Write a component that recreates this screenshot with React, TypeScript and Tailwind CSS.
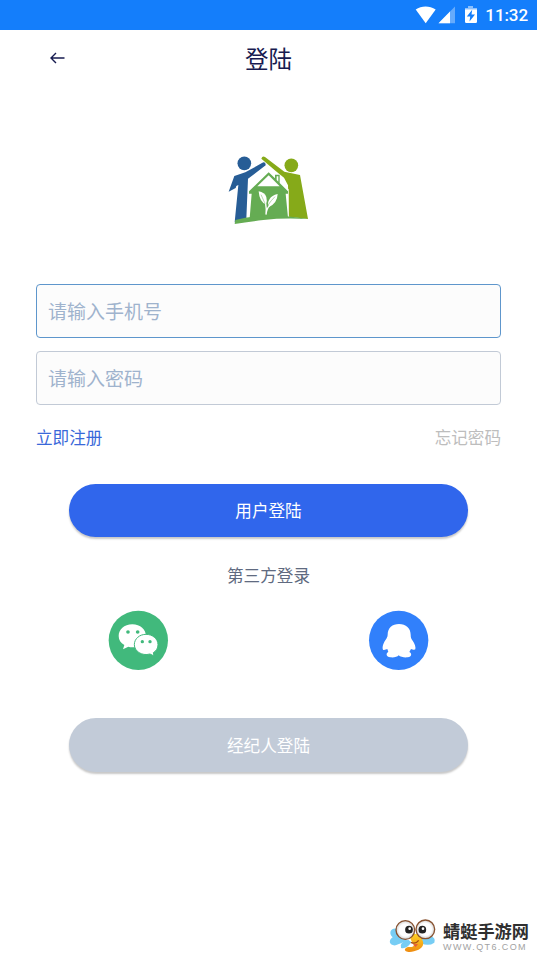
import React from "react";

function StatusIcons() {
  return (
    <svg className="h-[30px] w-[68px]" viewBox="0 0 68 30" aria-hidden="true">
      <path d="M0.7 9.5C6.5 5.6 14.5 5.6 20.7 9.5L10.7 23.2Z" fill="#fff" />
      <path d="M40 6.5V23.2H23.5Z" fill="#fff" fillOpacity=".35" />
      <path d="M35 11.5V23.2H23.5Z" fill="#fff" />
      <path d="M53 6h5v2h4v4H50V8h3z" fill="#fff" fillOpacity=".5" />
      <path d="M50 9.5h12v12.2a1.3 1.3 0 0 1-1.3 1.3h-9.4a1.3 1.3 0 0 1-1.3-1.3z" fill="#fff" />
      <path d="M57.2 9.7 51.8 16.5h3.4l-.7 5 5.5-7h-3.5z" fill="#147efb" />
    </svg>
  );
}

function HomeLogo() {
  return (
    <svg className="mr-px h-[84px] w-24" viewBox="0 0 288 252" aria-label="logo">
      <g fill="#275d96">
        <circle cx="73" cy="46" r="20.5" />
        <path d="M26 131 43 84 76 73 130 43Q138 43 137 52L84 92 79 212 44 223 55 111 49 114 47 120Z" />
      </g>
      <g fill="#86aa19">
        <circle cx="214" cy="52" r="20.5" />
        <path d="M124 32Q127 23 135 27L193 71 240 81 264 213 206 206 204 112 192 89 168 70Z" />
      </g>
      <path d="M86 124 146 69 206 124 206 208 82 208Z" fill="#fff" />
      <g fill="#65ac53">
        <path d="M165 91V80h14v25l25 25v7H197L204 209 89 211 95 137H87v-7l59-57Z" />
        <path d="M46 216Q140 190 263 213 190 209 130 216 83 222 44 228Z" />
      </g>
      <path d="M146 82 179 115H112Z" fill="#fff" />
      <path d="M170 85h5v16l-5-5Z" fill="#fff" />
      <g fill="#fff">
        <path d="M116 130Q134 133 139 147 142 157 138 170 118 161 116 130Z" />
        <path d="M173 138Q172 165 147 177 140 166 149 153 155 142 173 138Z" />
      </g>
      <path d="M123 140Q137 162 138 190M165 146Q141 169 138 190" fill="none" stroke="#65ac53" strokeWidth="1.5" />
      <path d="M137 168Q140 181 138 200M148 174Q140 181 138 200" fill="none" stroke="#fff" strokeWidth="4" />
    </svg>
  );
}

function WechatIcon() {
  return (
    <svg className="size-[76px]" viewBox="0 0 228 228" aria-label="WeChat">
      <circle cx="115" cy="115" r="89" fill="#41b97c" />
      <path d="M97 67C72 67 56 83 56 102C56 114 62 123 73 129L69 142 85 134C92 136 101 136 110 134L138 104C138 82 121 67 97 67Z" fill="#fff" />
      <path d="M138 97C157 97 174 110 174 128C174 138 169 147 160 152L162 162 150 156C125 163 103 147 103 128C103 110 119 97 138 97Z" fill="#fff" stroke="#41b97c" strokeWidth="3" />
      <g fill="#41b97c">
        <circle cx="84" cy="90" r="5.5" />
        <circle cx="113" cy="90" r="5.5" />
        <circle cx="127" cy="119" r="5" />
        <circle cx="150" cy="119" r="5" />
      </g>
    </svg>
  );
}

function QqIcon() {
  return (
    <svg className="size-[76px]" viewBox="0 0 228 228" aria-label="QQ">
      <circle cx="116" cy="115" r="89" fill="#3180fb" />
      <path d="M117 66C97 66 83 78 83 98C83 105 80 108 76 115C69 125 66 138 69 143C73 145 78 142 82 141L85 150C77 153 78 165 91 166C102 167 112 165 116 160C121 165 132 167 143 166C156 165 156 153 148 150L153 141C157 142 163 145 166 142C168 135 164 124 158 116C154 110 152 107 152 98C152 79 138 66 117 66Z" fill="#fff" />
    </svg>
  );
}

function Dragonfly() {
  return (
    <svg className="h-[44px] w-[52px]" viewBox="0 0 156 132" aria-hidden="true">
      <defs>
        <radialGradient id="eye"><stop offset=".65" stopColor="#fff" /><stop offset="1" stopColor="#d0d0d0" /></radialGradient>
        <linearGradient id="body" x2="0" y2="1"><stop stopColor="#ffd126" /><stop offset="1" stopColor="#ee8b10" /></linearGradient>
      </defs>
      <g fill="#77cdf4">
        <path d="M37 50C14 46 11 66 23 76 8 86 14 102 32 100L67 86Z" />
        <path d="M132 69Q155 78 148 92 131 104 108 94L103 75Z" />
        <path d="M70 83Q41 91 48 108 64 113 79 91Z" />
      </g>
      <path d="M75 66C73 91 92 94 85 103 78 108 68 101 60 111 57 120 74 122 87 118 107 113 121 101 112 84L108 66Z" fill="url(#body)" />
      <path d="M78 91Q91 98 101 85" fill="none" stroke="#a64916" strokeWidth="4" />
      <path d="m84 97 8 8 7-9" fill="#e55a3c" />
      <g fill="url(#eye)" stroke="#87512f" strokeWidth="4">
        <circle cx="61" cy="54" r="28" />
        <circle cx="121" cy="52" r="28" />
      </g>
      <g fill="#222"><circle cx="72" cy="53" r="11.5" /><circle cx="112" cy="53" r="11.5" /></g>
      <g fill="#fff"><circle cx="74" cy="50" r="4" /><circle cx="114" cy="50" r="4" /></g>
    </svg>
  );
}

export default function App() {
  return (
    <div className="flex h-[956px] w-full flex-col overflow-hidden bg-white font-['Noto_Sans_CJK_SC',sans-serif]">
      <div className="flex h-[30px] shrink-0 items-center justify-end bg-[#147efb] pr-[9px] text-white">
        <StatusIcons />
        <span className="ml-[2px] pt-[2px] font-['Roboto',sans-serif] text-[17px] font-medium tracking-[-0.1px]">11:32</span>
      </div>
      <header className="grid h-[58px] shrink-0 grid-cols-[1fr_auto_1fr] items-center text-[#171b50]">
        <button className="-mt-[2px] ml-[50px] w-4" aria-label="返回">
          <svg className="h-4 w-4" viewBox="0 0 16 16" fill="none" stroke="currentColor" strokeWidth="1.4">
            <path d="M14.5 8H1.2M6 3 1 8l5 5" />
          </svg>
        </button>
        <h1 className="text-[23.5px] leading-none">登陆</h1>
      </header>
      <main className="flex flex-col px-9 pt-[60px]">
        <div className="flex justify-center"><HomeLogo /></div>
        <form className="mt-[52px] flex flex-col gap-[13px]" onSubmit={(e) => e.preventDefault()}>
          <input className="h-[54px] w-full rounded-[4px] border border-[#5e96cc] bg-[#fcfcfc] pr-3 pb-[2px] pl-[11px] text-[19px] text-[#171b50] outline-none placeholder:text-[#9fb3cd] placeholder:opacity-100" placeholder="请输入手机号" />
          <input type="password" className="h-[54px] w-full rounded-[4px] border border-[#c2cad6] bg-[#fcfcfc] pr-3 pb-[2px] pl-[11px] text-[19px] text-[#171b50] outline-none placeholder:text-[#9fb3cd] placeholder:opacity-100" placeholder="请输入密码" />
        </form>
        <div className="mt-5 flex h-6 items-center justify-between text-[16.6px]">
          <button className="text-[#3968d9]">立即注册</button>
          <button className="text-[#bdbdbd]">忘记密码</button>
        </div>
        <button className="mt-[35px] h-[53px] w-[399px] self-center rounded-full bg-[#3066ec] text-[16.6px] text-white shadow-[0_2px_2px_rgba(0,0,0,0.22)]">用户登陆</button>
        <p className="mt-[26px] text-center text-[16.6px] leading-6 text-[#606a80]">第三方登录</p>
        <div className="mt-[15px] flex justify-between pr-[65px] pl-16">
          <button><WechatIcon /></button>
          <button><QqIcon /></button>
        </div>
        <button className="mt-10 h-[54px] w-[399px] self-center rounded-full bg-[#c2cbd8] text-[16.6px] text-white shadow-[0_2px_2px_rgba(0,0,0,0.22)]">经纪人登陆</button>
      </main>
      <footer className="mt-auto flex h-[44px] items-center self-end pr-[8px]">
        <Dragonfly />
        <div className="ml-[6px] flex flex-col items-start pt-[4px]">
          <span className="text-[17.2px] leading-[20px] font-bold text-[#303030]">蜻蜓手游网</span>
          <span className="mt-px font-['Liberation_Sans',sans-serif] text-[9px] leading-[10px] tracking-[1.4px] whitespace-nowrap text-[#a2a2a2]">WWW.QT6.COM</span>
        </div>
      </footer>
    </div>
  );
}
